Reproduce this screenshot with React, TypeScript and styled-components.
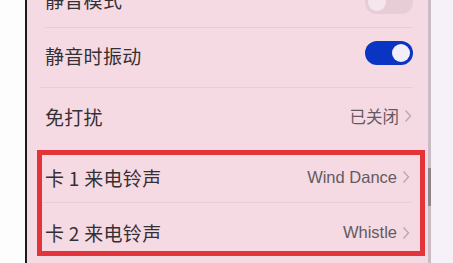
import { FC } from 'react'
import styled, { createGlobalStyle } from 'styled-components'

const GlobalStyle = createGlobalStyle`
    html, body { margin: 0; padding: 0; background: #fbf9fc; }
    body { font-family: "Noto Sans CJK SC", "Liberation Sans", sans-serif; }
`

type RowData = { label: string, value?: string, toggle?: 'on' | 'off' }

const Settings:FC = ()=>{
    return(
        <Page>
            <GlobalStyle/>
            <Margin/>
            <Bezel/>
            <Screen>
                <TopRow>
                    <Label>静音模式</Label>
                    <Toggle $on={false}><Knob $on={false}/></Toggle>
                </TopRow>
                <Item data={{ label: '静音时振动', toggle: 'on' }} height={60} offset={-5}/>
                <Item data={{ label: '免打扰', value: '已关闭' }} height={60} offset={-4} last/>
                <Highlight>
                    <Item data={{ label: '卡 1 来电铃声', value: 'Wind Dance' }} height={48} offset={-3}/>
                    <Item data={{ label: '卡 2 来电铃声', value: 'Whistle' }} height={48} offset={11} last/>
                </Highlight>
            </Screen>
            <Track><Thumb/></Track>
            <Edge/>
        </Page>
    )
}

const Item:FC<{ data: RowData, height: number, offset?: number, last?: boolean }> = ({ data, height, offset = 0, last })=>(
    <Row $h={height} $off={offset} $last={!!last}>
        <Label>{data.label}</Label>
        {data.toggle && <Toggle $on={data.toggle === 'on'} $lift={5}><Knob $on={data.toggle === 'on'}/></Toggle>}
        {data.value && (
            <Value>
                {data.value}
                <Chevron viewBox="0 0 8 14"><path d="M1.5 1.5 L6.5 7 L1.5 12.5" /></Chevron>
            </Value>
        )}
    </Row>
)

const Page = styled.div`
    display: flex;
    width: 453px;
    height: 263px;
    overflow: hidden;
`
const Margin = styled.div`
    width: 25px;
    background: #fdfdfe;
`
const Bezel = styled.div`
    width: 2px;
    background: #1c1a1e;
`
const Screen = styled.div`
    width: 401px;
    background: #f5dae3;
    display: flex;
    flex-direction: column;
    overflow: hidden;
`
const Track = styled.div`
    width: 3px;
    background: #c9bcc4;
    display: flex;
    flex-direction: column;
    padding-top: 168px;
`
const Thumb = styled.div`
    height: 38px;
    background: #8f858c;
`
const Edge = styled.div`
    flex: 1;
    background: #f6f1f8;
`
const TopRow = styled.div`
    height: 28px;
    margin: 0 15px 0 18px;
    display: flex;
    align-items: flex-start;
    justify-content: space-between;
    border-bottom: 1px solid #ebccd7;
    box-sizing: border-box;
    & > span { margin-top: -14px; }
    & > div { margin-top: -10px; }
`
const Row = styled.div<{ $h: number, $off: number, $last: boolean }>`
    height: ${p => p.$h}px;
    box-sizing: border-box;
    margin: 0 15px 0 13px;
    padding: ${p => p.$off > 0 ? `${p.$off}px 0 0 5px` : `0 0 ${-p.$off}px 5px`};
    display: flex;
    align-items: center;
    justify-content: space-between;
    border-bottom: ${p => p.$last ? 'none' : '1px solid #ebcdd8'};
`
const Label = styled.span`
    font-size: 19px;
    color: #353034;
    letter-spacing: 0.3px;
`
const Value = styled.span`
    display: flex;
    align-items: center;
    gap: 5px;
    font-family: "Liberation Sans", "Noto Sans CJK SC", sans-serif;
    font-size: 16.5px;
    color: #645b61;
    margin-right: 1px;
`
const Chevron = styled.svg`
    width: 8px;
    height: 14px;
    fill: none;
    stroke: #b7aab2;
    stroke-width: 1.4;
`
const Toggle = styled.div<{ $on: boolean, $lift?: number }>`
    width: 48px;
    height: 24px;
    border-radius: 12px;
    background: ${p => p.$on ? '#0a35c2' : '#e6cdd6'};
    display: flex;
    align-items: center;
    justify-content: ${p => p.$on ? 'flex-end' : 'flex-start'};
    padding: 0 3px;
    box-sizing: border-box;
    margin-bottom: ${p => (p.$lift ?? 0)}px;
`
const Knob = styled.div<{ $on: boolean }>`
    width: 18px;
    height: 18px;
    border-radius: 50%;
    background: ${p => p.$on ? '#f4eef8' : '#f4e6ec'};
`
const Highlight = styled.div`
    margin: 2px 3px 0 10px;
    border: 5px solid #e3343a;
    display: flex;
    flex-direction: column;
    & > div { margin: 0 9px 0 0; padding-left: 3px; }
`

export default Settings
